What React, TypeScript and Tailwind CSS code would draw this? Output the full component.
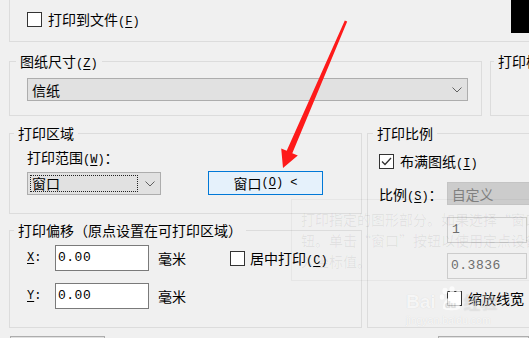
import React from "react";

const Mn = ({ k }: { k: string }) => (
  <span className="font-['Liberation_Mono',monospace] text-[12px] leading-[12px]">
    (<span className="underline underline-offset-2">{k}</span>)
  </span>
);

const Check = ({ checked = false }: { checked?: boolean }) => (
  <span className="w-[15px] h-[15px] shrink-0 border border-[#333333] bg-white flex items-center justify-center">
    {checked && (
      <svg width="11" height="9" viewBox="0 0 11 9">
        <polyline points="1,4.5 4,7.5 10,1" fill="none" stroke="#333333" strokeWidth="1.3" />
      </svg>
    )}
  </span>
);

const Chevron = () => (
  <svg width="10" height="6" viewBox="0 0 10 6" className="shrink-0">
    <polyline points="0.5,0.5 5,5 9.5,0.5" fill="none" stroke="#606060" strokeWidth="1" />
  </svg>
);

const Legend = ({ children, ml }: { children: React.ReactNode; ml: string }) => (
  <legend className={`${ml} px-[4px] h-[20px] leading-[20px] whitespace-nowrap`}>{children}</legend>
);

export default function App() {
  return (
    <div className="relative w-[529px] h-[338px] overflow-hidden bg-[#f0f0f0] font-['Noto_Sans_CJK_SC',sans-serif] text-[14px] leading-[20px] text-black">
      {/* top group (bottom part) */}
      <div className="ml-[9px] w-[540px] h-[42px] border-l border-b border-[#dcdcdc] flex items-start pl-[17px]">
        <label className="mt-[9px] flex items-center h-[20px]">
          <Check />
          <span className="ml-[6px] whitespace-nowrap">
            打印到文件<Mn k="F" />
          </span>
        </label>
        <div className="ml-auto mr-[20px] w-[18px] h-[33px] bg-black" />
      </div>

      {/* row 2 */}
      <div className="mt-[9px] ml-[9px] flex gap-[8px] h-[65px]">
        <fieldset className="w-[473px] shrink-0 border border-[#dcdcdc] m-0 p-0 min-w-0">
          <Legend ml="ml-[6px]">
            图纸尺寸<Mn k="Z" />
          </Legend>
          <div className="pl-[17px] pr-[13px] pt-[7px]">
            <div className="h-[23px] border border-[#adadad] bg-[#e1e1e1] flex items-center pl-[4px] pr-[5px]">
              <span className="flex-1">信纸</span>
              <Chevron />
            </div>
          </div>
        </fieldset>
        <fieldset className="w-[200px] shrink-0 border border-[#dcdcdc] m-0 p-0 min-w-0">
          <Legend ml="ml-[3px]">打印样式表(笔指定)</Legend>
        </fieldset>
      </div>

      {/* row 3 */}
      <div className="mt-[7px] ml-[9px] flex gap-[5px] h-[205px]">
        <div className="w-[353px] shrink-0 flex flex-col gap-[6px]">
          <fieldset className="h-[91px] border border-[#dcdcdc] m-0 p-0 min-w-0">
            <Legend ml="ml-[4px]">打印区域</Legend>
            <div className="pl-[17px] pt-[4px]">
              <div className="h-[20px] whitespace-nowrap">
                打印范围<Mn k="W" />：
              </div>
              <div className="mt-[4px] flex items-start">
                <div className="mt-[1px] w-[134px] h-[23px] border border-[#adadad] bg-[#e1e1e1] flex items-center pl-[2px] pr-[5px]">
                  <div className="w-[108px] h-[17px] border border-dotted border-[#222] flex items-center pl-[1px] leading-[15px]">
                    窗口
                  </div>
                  <span className="flex-1" />
                  <Chevron />
                </div>
                <div className="ml-[47px] w-[115px] h-[24px] border border-[#0078d7] bg-[#e5f1fb] flex items-center justify-center whitespace-nowrap">
                  窗口<Mn k="O" />
                  <span className="font-['Liberation_Mono',monospace] text-[12px] leading-[12px]">&nbsp;&lt;</span>
                </div>
              </div>
            </div>
          </fieldset>

          <fieldset className="flex-1 border border-[#dcdcdc] m-0 p-0 min-w-0">
            <Legend ml="ml-[4px]">打印偏移（原点设置在可打印区域）</Legend>
            <div className="pl-[17px] pt-[5px] flex flex-col gap-[12px]">
              {["X", "Y"].map((a) => (
                <div key={a} className="h-[26px] flex items-center">
                  <span className="w-[28px] font-['Liberation_Mono',monospace] text-[12px] leading-[12px]">
                    <span className="underline underline-offset-2">{a}</span>:
                  </span>
                  <div className="w-[94px] h-[26px] border border-[#7a7a7a] bg-white flex items-center pl-[2px] font-['Liberation_Mono',monospace] text-[13px] leading-[16px] tracking-[0.5px]">
                    0.00
                  </div>
                  <span className="ml-[9px]">毫米</span>
                  {a === "X" && (
                    <label className="ml-[44px] flex items-center whitespace-nowrap">
                      <Check />
                      <span className="ml-[5px]">
                        居中打印<Mn k="C" />
                      </span>
                    </label>
                  )}
                </div>
              ))}
            </div>
          </fieldset>
        </div>

        <fieldset className="w-[200px] shrink-0 border border-[#dcdcdc] m-0 p-0 min-w-0">
          <Legend ml="ml-[5px]">打印比例</Legend>
          <div className="pl-[11px] pt-[8px] flex flex-col">
            <label className="h-[20px] flex items-center whitespace-nowrap">
              <Check checked />
              <span className="ml-[6px]">
                布满图纸<Mn k="I" />
              </span>
            </label>
            <div className="mt-[11px] h-[23px] flex items-center whitespace-nowrap">
              <span className="w-[68px]">
                比例<Mn k="S" />：
              </span>
              <div className="w-[120px] h-[23px] border border-[#c4c4c4] bg-[#cccccc] text-[#808080] flex items-center pl-[4px]">
                自定义
              </div>
            </div>
            <div className="mt-[12px] ml-[68px] w-[80px] h-[26px] border border-[#cccccc] flex items-center pl-[4px] text-[#6d6d6d] font-['Liberation_Mono',monospace] text-[13px] leading-[16px]">
              1
            </div>
            <div className="mt-[10px] ml-[68px] w-[80px] h-[26px] border border-[#cccccc] flex items-center pl-[3px] text-[#6d6d6d] font-['Liberation_Mono',monospace] text-[13px] leading-[16px] tracking-[0.5px]">
              0.3836
            </div>
            <label className="mt-[9px] ml-[68px] h-[20px] flex items-center whitespace-nowrap">
              <Check />
              <span className="ml-[6px]">缩放线宽</span>
            </label>
          </div>
        </fieldset>
      </div>

      {/* bottom partial buttons */}
      <div className="mt-[8px] flex">
        <div className="ml-[10px] w-[104px] h-[20px] border border-[#adadad] bg-[#e1e1e1]" />
        <div className="ml-[333px] w-[100px] h-[20px] border border-[#adadad] bg-[#e1e1e1]" />
      </div>

      {/* ghost tooltip */}
      <div className="pointer-events-none absolute left-[291px] top-[199px] w-[300px] h-[82px] border border-black/[0.04] pl-[9px] pt-[9px] leading-[21px] text-black/[0.07] whitespace-nowrap">
        <div>打印指定的图形部分。如果选择“窗口”，“窗口”按</div>
        <div>钮。单击“窗口”按钮以使用定点设备指定要打印区域</div>
        <div>入坐标值。</div>
      </div>

      {/* watermark */}
      <div className="pointer-events-none absolute left-[406px] top-[285px] text-white/80 [text-shadow:0_0_1px_rgba(0,0,0,0.15)]">
        <div className="flex items-end h-[27px]">
          <span className="font-['Liberation_Sans',sans-serif] font-bold text-[19px] leading-[20px]">Bai</span>
          <svg width="24" height="26" viewBox="0 0 24 26" className="ml-[3px] opacity-75">
            <ellipse cx="6" cy="5" rx="2.6" ry="3.2" fill="white" />
            <ellipse cx="13" cy="3.5" rx="2.6" ry="3.2" fill="white" />
            <ellipse cx="19.5" cy="7" rx="2.4" ry="3" fill="white" />
            <ellipse cx="3" cy="11" rx="2.2" ry="2.8" fill="white" />
            <path d="M4 22 C4 15 9 11 12 11 C16 11 21 15 21 22 C21 25 4 25 4 22Z" fill="white" />
            <text x="6" y="22" fontSize="9" fontWeight="bold" fill="#d8d8d8" fontFamily="Liberation Sans">du</text>
          </svg>
          <span className="ml-[1px] text-[17px] leading-[20px] font-bold text-white/40">经验</span>
        </div>
        <div className="mt-[2px] font-['Liberation_Sans',sans-serif] text-[10.5px] leading-[12px]">jingyan.baidu.com</div>
      </div>

      {/* red arrow */}
      <svg className="pointer-events-none absolute left-0 top-0" width="529" height="338" viewBox="0 0 529 338">
        <polygon
          points="344.8,20.5 347.2,21.6 292.3,153.2 297.8,155.6 283,168 281.2,148.5 286.7,150.8"
          fill="#fe1a1a"
        />
      </svg>
    </div>
  );
}
